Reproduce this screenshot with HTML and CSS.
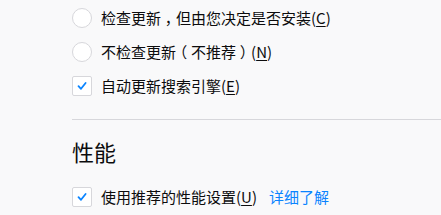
FILE: index.html
```html
<!DOCTYPE html>
<html>
<head>
  <meta charset="UTF-8">
  <title>更新与性能</title>
  <link rel="stylesheet" href="styles.css">
</head>
<body>
  <div class="prefs">
    <div class="option">
      <span class="radio"></span>
      <span class="label">检查更新<span class="punct">，</span>但由您决定是否安装(<u>C</u>)</span>
    </div>
    <div class="option">
      <span class="radio"></span>
      <span class="label">不检查更新<span class="punct">（</span>不推荐<span class="punct">）</span>(<u>N</u>)</span>
    </div>
    <div class="option">
      <span class="checkbox">
        <svg class="check" viewBox="0 0 12 12"><path d="M2.5 6.2L5 8.8L9.6 3" fill="none" stroke="currentColor" stroke-width="1.8" stroke-linecap="round" stroke-linejoin="round"/></svg>
      </span>
      <span class="label">自动更新搜索引擎(<u>E</u>)</span>
    </div>

    <hr class="divider">

    <h2 class="section-title">性能</h2>

    <div class="option">
      <span class="checkbox">
        <svg class="check" viewBox="0 0 12 12"><path d="M2.5 6.2L5 8.8L9.6 3" fill="none" stroke="currentColor" stroke-width="1.8" stroke-linecap="round" stroke-linejoin="round"/></svg>
      </span>
      <span class="label">使用推荐的性能设置(<u>U</u>)</span>
      <a class="learn-more" href="#">详细了解</a>
    </div>
  </div>
</body>
</html>
```

FILE: styles.css
```css
body {
  margin: 0;
  background-color: #f9f9fa;
  color: #0c0c0d;
  font-family: "Noto Sans CJK SC", "Liberation Sans", sans-serif;
  font-size: 15px;
}
.prefs {
  padding: 1px 0 0 72px;
  display: flex;
  flex-direction: column;
}
.option {
  height: 34px;
  display: flex;
  align-items: center;
  gap: 9px;
}
.radio {
  width: 18px;
  height: 18px;
  border: 1px solid #d7d7db;
  border-radius: 50%;
  background-color: #fff;
  flex-shrink: 0;
}
.checkbox {
  width: 18px;
  height: 18px;
  border: 1px solid #d7d7db;
  border-radius: 2px;
  background-color: #fff;
  color: #0a84ff;
  display: flex;
  align-items: center;
  justify-content: center;
  flex-shrink: 0;
}
.check {
  width: 12px;
  height: 12px;
}
.label {
  line-height: 20px;
}
.label u {
  text-underline-offset: 2px;
}
/* 全角标点居中显示 */
.punct {
  font-feature-settings: "halt";
  padding: 0 0.25em;
}
.learn-more {
  margin-left: 3px;
  color: #0a84ff;
  text-decoration: none;
  line-height: 20px;
}
.divider {
  margin: 16px 0 0 0;
  border: none;
  border-top: 1px solid #d7d7db;
  height: 0;
}
.section-title {
  margin: 16px 0 14px 0;
  font-size: 22px;
  font-weight: normal;
  line-height: 30px;
}
```
